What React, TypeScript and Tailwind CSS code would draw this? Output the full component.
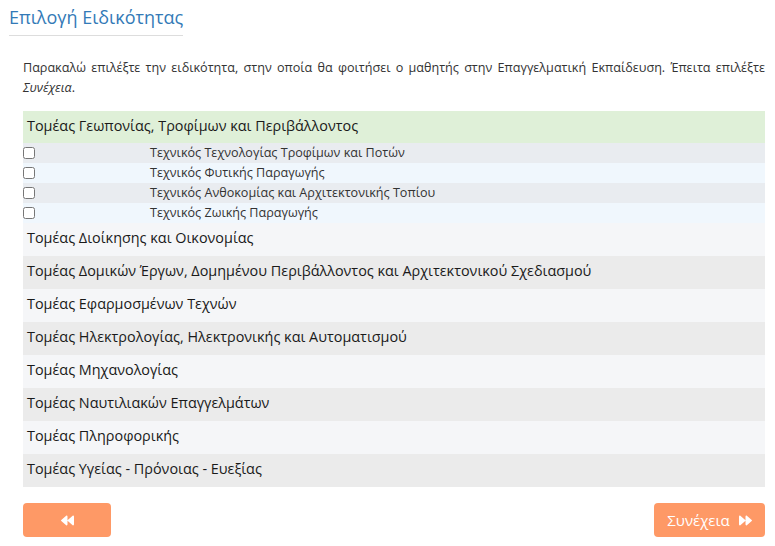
import { FaBackward, FaForward } from 'react-icons/fa';

const SPECIALTIES = [
  'Τεχνικός Τεχνολογίας Τροφίμων και Ποτών',
  'Τεχνικός Φυτικής Παραγωγής',
  'Τεχνικός Ανθοκομίας και Αρχιτεκτονικής Τοπίου',
  'Τεχνικός Ζωικής Παραγωγής',
];

const SECTORS = [
  'Τομέας Διοίκησης και Οικονομίας',
  'Τομέας Δομικών Έργων, Δομημένου Περιβάλλοντος και Αρχιτεκτονικού Σχεδιασμού',
  'Τομέας Εφαρμοσμένων Τεχνών',
  'Τομέας Ηλεκτρολογίας, Ηλεκτρονικής και Αυτοματισμού',
  'Τομέας Μηχανολογίας',
  'Τομέας Ναυτιλιακών Επαγγελμάτων',
  'Τομέας Πληροφορικής',
  'Τομέας Υγείας - Πρόνοιας - Ευεξίας',
];

export default function App() {
  return (
    <div className="min-h-[546px] w-[775px] bg-white text-[#333] font-['Open_Sans',sans-serif]">
      <div className="px-[9px] pt-[5px]">
        <h2 className="inline-block whitespace-nowrap border-b border-[#ddd] pb-[6px] text-[18px] leading-[24px] text-[#337ab7]">
          Επιλογή Ειδικότητας
        </h2>
      </div>

      <div className="pl-[23px] pr-[10px]">
        <p className="mt-[22px] text-justify text-[12.6px] leading-[20px]">
          Παρακαλώ επιλέξτε την ειδικότητα, στην οποία θα φοιτήσει ο μαθητής στην Επαγγελματική Εκπαίδευση. Έπειτα επιλέξτε{' '}
          <i>Συνέχεια</i>.
        </p>

        <div className="mt-[13px] text-[#1a1a1a]">
          <div className="flex h-[32px] items-center bg-[#dff0d8] px-[4px] pb-[3px] text-[14.4px]">
            Τομέας Γεωπονίας, Τροφίμων και Περιβάλλοντος
          </div>
          {SPECIALTIES.map((name, i) => (
            <label
              key={name}
              className={`flex h-[20px] items-center text-[12.6px] text-[#333] ${i % 2 === 0 ? 'bg-[#e9ecf0]' : 'bg-[#f0f7fd]'}`}
            >
              <span className="w-[127px]">
                <input type="checkbox" className="m-0 block h-[12px] w-[12px]" />
              </span>
              <span>{name}</span>
            </label>
          ))}
          {SECTORS.map((name, i) => (
            <div
              key={name}
              className={`flex h-[33px] items-center px-[4px] pb-[3px] text-[14.4px] ${i % 2 === 0 ? 'bg-[#f5f6f8]' : 'bg-[#ebebeb]'}`}
            >
              {name}
            </div>
          ))}
        </div>

        <div className="mt-[16px] flex justify-between">
          <button className="flex h-[34px] w-[88px] items-center justify-center rounded-[4px] bg-[#fe9966] text-white">
            <FaBackward className="h-[13px] w-[13px]" />
          </button>
          <button className="flex h-[34px] w-[111px] items-center justify-center gap-[9px] rounded-[4px] bg-[#fe9966] text-[15px] text-white">
            Συνέχεια
            <FaForward className="h-[13px] w-[13px]" />
          </button>
        </div>
      </div>
    </div>
  );
}
